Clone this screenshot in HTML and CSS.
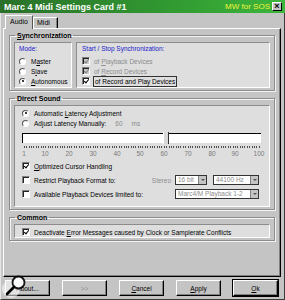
FILE: index.html
```html
<!DOCTYPE html>
<html>
<head>
    <meta charset="utf-8">
    <title>Marc 4 Midi Settings Card #1</title>
    <link rel="stylesheet" href="styles.css">
</head>
<body>
<div class="window">
    <div class="titlebar">
        <span class="title">Marc 4 Midi Settings Card #1</span>
        <span class="brand">MW for SOS</span>
        <span class="close">&#215;</span>
    </div>
    <div class="client">
        <div class="tabs">
            <span class="tab active">Audio</span>
            <span class="tab">Midi</span>
        </div>
        <div class="panel">
            <fieldset class="group">
                <legend><u>S</u>ynchronization</legend>
                <div class="sync">
                    <div class="box mode">
                        <div class="caption">Mode:</div>
                        <div class="row"><span class="radio"></span><span>M<u>a</u>ster</span></div>
                        <div class="row"><span class="radio"></span><span>S<u>l</u>ave</span></div>
                        <div class="row"><span class="radio on"></span><span><u>A</u>utonomous</span></div>
                    </div>
                    <div class="box startstop">
                        <div class="caption">Start / Stop Synchronization:</div>
                        <div class="row off"><span class="check on dim"></span><span>of <u>P</u>layback Devices</span></div>
                        <div class="row off"><span class="check on dim"></span><span>of <u>R</u>ecord Devices</span></div>
                        <div class="row"><span class="check on"></span><span class="focus">of Record and Play Devices</span></div>
                    </div>
                </div>
            </fieldset>

            <fieldset class="group">
                <legend>Direct Sound</legend>
                <div class="box direct">
                    <div class="row"><span class="radio on"></span><span>Automatic <u>L</u>atency Adjustment</span></div>
                    <div class="row"><span class="radio"></span><span>Ad<u>j</u>ust Latency Manually:</span><span class="latency">60</span><span class="unit">ms</span></div>
                    <div class="slider">
                        <div class="track"><span class="thumb" style="left:140px"></span></div>
                        <div class="ticks"></div>
                        <div class="scale">
                            <span style="left:2px">1</span>
                            <span style="left:23px">10</span>
                            <span style="left:47px">20</span>
                            <span style="left:71px">30</span>
                            <span style="left:95px">40</span>
                            <span style="left:118px">50</span>
                            <span style="left:142px">60</span>
                            <span style="left:166px">70</span>
                            <span style="left:190px">80</span>
                            <span style="left:213px">90</span>
                            <span style="left:237px">100</span>
                        </div>
                    </div>
                    <div class="row tall"><span class="check on"></span><span><u>O</u>ptimized Cursor Handling</span></div>
                    <div class="row tall"><span class="check"></span><span>Restrict Playback Format to:</span>
                        <span class="spacer"></span>
                        <span class="label-off">Stereo</span>
                        <span class="select bits"><span class="value">16 bit</span><span class="arrow"></span></span>
                        <span class="select rate"><span class="value">44100 Hz</span><span class="arrow"></span></span>
                    </div>
                    <div class="row tall"><span class="check"></span><span>Available Playback Devices limited to:</span>
                        <span class="spacer"></span>
                        <span class="select device"><span class="value">Marc4/M Playback 1-2</span><span class="arrow"></span></span>
                    </div>
                </div>
            </fieldset>

            <fieldset class="group">
                <legend>Common</legend>
                <div class="box common">
                    <div class="row"><span class="check on"></span><span>Deactivate <u>E</u>rror Messages caused by Clock or Samplerate Conflicts</span></div>
                </div>
            </fieldset>
        </div>
        <div class="buttons">
            <span class="btn">About...</span>
            <span class="btn off">&gt;&gt;</span>
            <span class="btn"><span><u>C</u>ancel</span></span>
            <span class="btn"><span><u>A</u>pply</span></span>
            <span class="btn default"><span><u>O</u>k</span></span>
        </div>
    </div>
    <svg class="magnifier" width="28" height="30" viewBox="0 0 28 30">
        <circle cx="11" cy="19" r="9" fill="#fff" opacity="0.55"/>
        <circle cx="18.5" cy="12.5" r="6" fill="#fff" opacity="0.9" stroke="#000" stroke-width="1.8"/>
        <line x1="14" y1="17" x2="7" y2="24" stroke="#000" stroke-width="2.6" stroke-linecap="round"/>
    </svg>
</div>
</body>
</html>
```

FILE: styles.css
```css
/* Marc 4 settings dialog */
body {
    margin: 0;
    font-family: "Liberation Sans", Arial, sans-serif;
    font-size: 6.5px;
    color: #000;
}
.window {
    position: relative;
    width: 285px;
    height: 300px;
    display: flex;
    flex-direction: column;
    background: #c4c4c4;
    overflow: hidden;
}
.titlebar {
    height: 13px;
    display: flex;
    align-items: center;
    padding: 0 3px 0 4px;
    background: linear-gradient(90deg, #2a702a, #319a31 60%, #3cb63c);
}
.title {
    color: #fff;
    font-weight: bold;
    font-size: 9px;
}
.brand {
    margin-left: auto;
    color: #f4f43c;
    font-size: 8px;
}
.close {
    width: 8px;
    height: 7px;
    margin-left: 2px;
    background: #c4c4c4;
    border: 1px solid;
    border-color: #fff #000 #000 #fff;
    font-size: 9px;
    font-weight: bold;
    line-height: 7px;
    text-align: center;
}
.client {
    flex: 1;
    display: flex;
    flex-direction: column;
    border-left: 1px solid #e6e6e6;
    border-right: 1px solid #3a3a3a;
    border-bottom: 1px solid #3a3a3a;
    padding: 0 3px 3px 2px;
}
.tabs {
    height: 15px;
    display: flex;
    align-items: flex-end;
    padding-left: 2px;
}
.tab {
    box-sizing: border-box;
    height: 11px;
    padding: 1px 0 0 3px;
    border: 1px solid;
    border-color: #fff #000 transparent #fff;
    border-bottom: 0;
    font-size: 7px;
}
.tab.active {
    width: 28px;
    height: 14px;
    padding: 2px 0 0 4px;
    margin-bottom: -1px;
    background: #c4c4c4;
    position: relative;
    z-index: 1;
    border-right-color: #555;
}
.tab + .tab {
    width: 25px;
    box-shadow: inset -1px 0 0 #808080;
}
.panel {
    height: 249px;
    box-sizing: border-box;
    border: 1px solid;
    border-color: #fff #000 #000 #fff;
    box-shadow: inset -1px -1px 0 #808080;
    padding: 2px 5px 0 5px;
}
.group {
    margin: 0 0 3px 0;
    padding: 2px 4px 2px 4px;
    border: 1px solid #8c8c8c;
    box-shadow: 1px 1px 0 #f4f4f4, inset 1px 1px 0 #f4f4f4;
    min-inline-size: 0;
}
.group legend {
    font-size: 7px;
    font-weight: bold;
    line-height: 9px;
    padding: 0 2px;
    margin-left: 1px;
}
.box {
    box-sizing: border-box;
    background: #dedede;
    border: 1px solid;
    border-color: #8c8c8c #fff #fff #8c8c8c;
}
.sync {
    display: flex;
    gap: 4px;
}
.mode {
    width: 58px;
    height: 46px;
    padding: 2px 3px 0 4px;
}
.startstop {
    flex: 1;
    height: 46px;
    padding: 2px 3px 0 5px;
}
.caption {
    color: #1818c8;
    line-height: 8px;
    margin-bottom: 3px;
}
.row {
    display: flex;
    align-items: center;
    height: 10px;
    white-space: nowrap;
}
.row.tall {
    height: 14px;
}
.row.off {
    color: #8c8c8c;
}
.radio {
    box-sizing: border-box;
    width: 7px;
    height: 7px;
    margin-right: 5px;
    border-radius: 50%;
    border: 1px solid;
    border-color: #555 #fff #fff #555;
    background: #fff;
    position: relative;
}
.radio.on::after {
    content: "";
    position: absolute;
    left: 1.5px;
    top: 1.5px;
    width: 2px;
    height: 2px;
    border-radius: 50%;
    background: #000;
}
.check {
    box-sizing: border-box;
    width: 8px;
    height: 8px;
    margin-right: 4px;
    border: 1px solid;
    border-color: #808080 #fff #fff #808080;
    box-shadow: inset 1px 1px 0 #222;
    background: #fff;
    position: relative;
}
.check.on::after {
    content: "";
    position: absolute;
    left: 2px;
    top: 0;
    width: 2px;
    height: 4px;
    border: solid #000;
    border-width: 0 1.5px 1.5px 0;
    transform: rotate(40deg);
}
.check.dim {
    background: #c8c8c8;
}
.check.dim::after {
    border-color: #808080;
}
.focus {
    border: 1px solid #333;
    padding: 0 1px;
    line-height: 9px;
    margin-left: -1px;
}
.direct {
    padding: 2px 10px 5px 7px;
}
.latency {
    color: #8c8c8c;
    margin-left: 9px;
}
.unit {
    color: #8c8c8c;
    margin-left: 9px;
}
.slider {
    margin-top: 5px;
    width: 239px;
}
.track {
    position: relative;
    box-sizing: border-box;
    height: 10px;
    background: #fff;
    border-top: 1px solid #000;
    border-left: 1px solid #000;
}
.thumb {
    position: absolute;
    top: -2px;
    width: 4px;
    height: 12px;
    background: #d8d8d8;
    border-right: 1px solid #333;
    border-left: 1px solid #fff;
}
.ticks {
    margin: 3px 0 0 2px;
    width: 236px;
    height: 2px;
    background: repeating-linear-gradient(90deg, #505050 0 1px, transparent 1px 2.37px);
}
.scale {
    position: relative;
    height: 9px;
    margin-top: 1px;
    margin-bottom: 1px;
    color: #7a7a7a;
    line-height: 9px;
}
.scale span {
    position: absolute;
    top: 0;
    transform: translateX(-50%);
}
.spacer {
    flex: 1;
}
.label-off {
    color: #8c8c8c;
    margin-right: 4px;
}
.select {
    box-sizing: border-box;
    display: flex;
    height: 10px;
    background: #fff;
    border: 1px solid #333;
    color: #8c8c8c;
}
.select .value {
    flex: 1;
    padding-left: 2px;
    line-height: 8px;
}
.select .arrow {
    width: 7px;
    background: #c4c4c4;
    border-left: 1px solid #808080;
    position: relative;
}
.select .arrow::after {
    content: "";
    position: absolute;
    left: 1.5px;
    top: 3px;
    border: 2px solid transparent;
    border-top: 2px solid #555;
}
.bits {
    width: 32px;
}
.rate {
    width: 46px;
    margin-left: 6px;
}
.device {
    width: 84px;
}
.common {
    height: 14px;
    padding: 2px 4px 0 7px;
}
.buttons {
    margin-top: 3px;
    height: 16px;
    display: flex;
    justify-content: space-between;
    padding: 0 3px 0 2px;
}
.btn {
    box-sizing: border-box;
    width: 45px;
    height: 16px;
    display: flex;
    align-items: center;
    justify-content: center;
    border: 1px solid;
    border-color: #fff #000 #000 #fff;
    box-shadow: inset -1px -1px 0 #808080;
}
.btn.off {
    color: #8c8c8c;
}
.btn.default {
    outline: 1px solid #000;
}
.magnifier {
    position: absolute;
    left: 0;
    top: 270px;
}
```
